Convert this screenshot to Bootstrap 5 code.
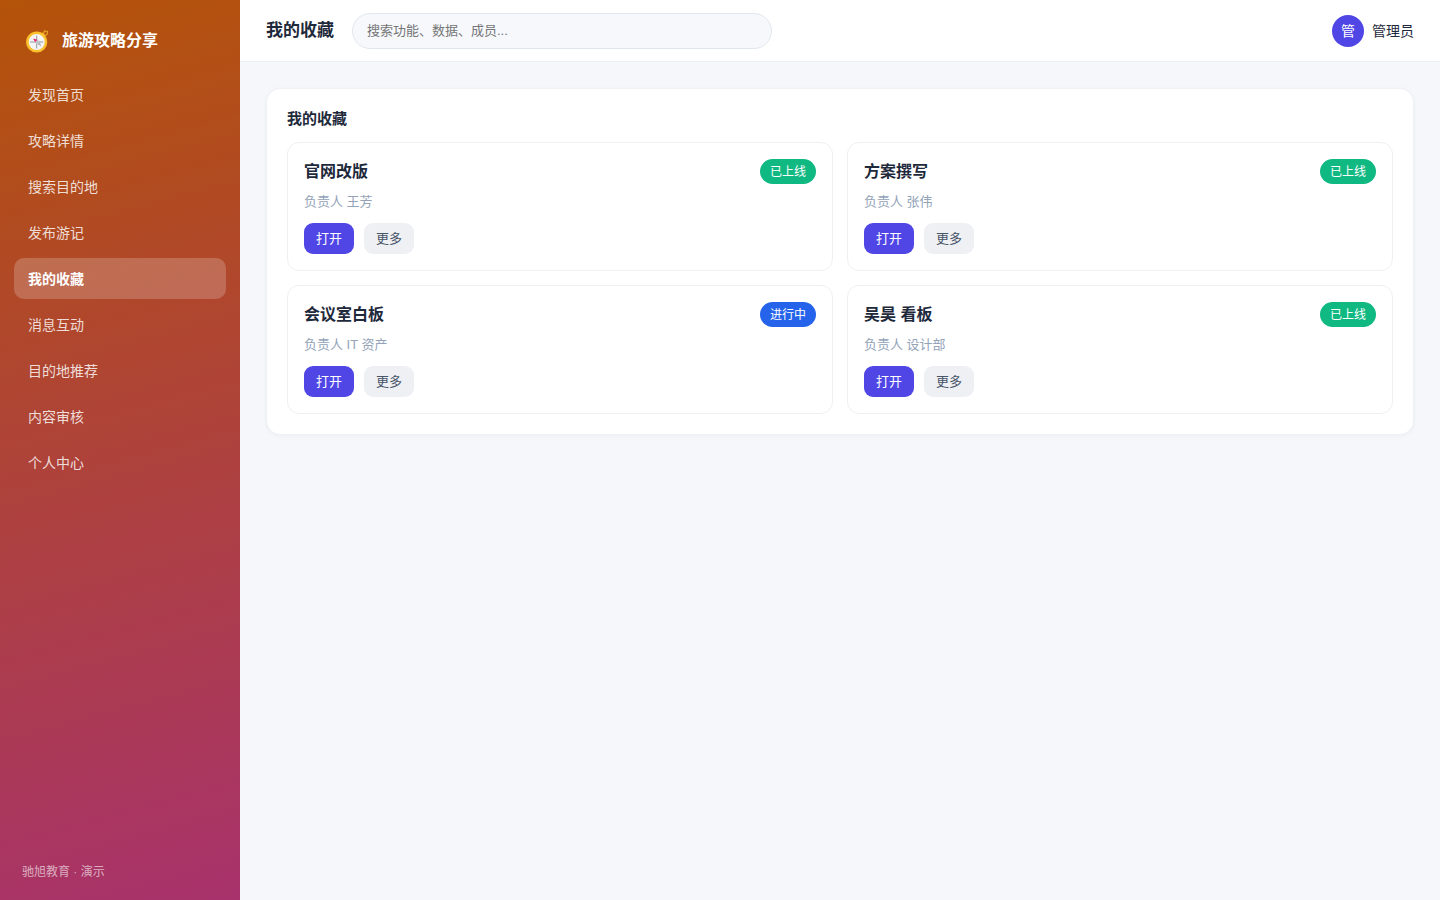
<!DOCTYPE html>
<html lang="zh-CN">
<head>
<meta charset="utf-8">
<meta name="viewport" content="width=device-width, initial-scale=1">
<title>我的收藏 - 旅游攻略分享</title>
<link href="https://cdn.jsdelivr.net/npm/bootstrap@5.3.0/dist/css/bootstrap.min.css" rel="stylesheet">
<style>
  body { font-family: "Liberation Sans", "Noto Sans CJK SC", sans-serif; font-size: 14px; line-height: 20px; color: #1e293b; background: #f5f7fb; }
  .sidebar { width: 240px; padding: 20px 14px; background: linear-gradient(165deg, #b45309, #a8326c); }
  .brand { padding: 0 12px; height: 42px; font-size: 16px; font-weight: 700; gap: 14px; margin-bottom: 12px; }
  .side-menu { gap: 5px; }
  .side-menu .nav-link { height: 41px; padding: 0 14px; border-radius: 10px; color: rgba(255,255,255,.82); }
  .side-menu .nav-link:hover { color: #fff; }
  .side-menu .nav-link.active { background: rgba(255,255,255,.2); color: #fff; font-weight: 700; }
  .side-foot { padding: 0 8px; font-size: 12px; line-height: 16px; color: rgba(255,255,255,.6); }
  .topbar { height: 62px; padding: 0 26px; gap: 18px; border-bottom: 1px solid #eceef2; }
  .topbar h1 { font-size: 17px; line-height: 24px; font-weight: 700; }
  .search-form { width: 420px; }
  .search-form .form-control { height: 36px; padding: 0 14px; font-size: 13px; background: #f6f8fc; border-color: #e2e6ee; }
  .search-form .form-control::placeholder { color: #757575; }
  .avatar { width: 32px; height: 32px; background: #4f46e5; }
  .content { padding: 26px; }
  .panel { padding: 20px; background: #fff; border: 1px solid #eff1f5; border-radius: 14px; box-shadow: 0 1px 4px rgba(15,23,42,.04); }
  .panel h2 { font-size: 15px; line-height: 20px; font-weight: 700; margin-bottom: 13px; }
  .tiles { --bs-gutter-x: 14px; --bs-gutter-y: 14px; }
  .tile { padding: 16px; border: 1px solid #eef0f3; border-radius: 12px; }
  .tile h3 { font-size: 16px; line-height: 26px; font-weight: 700; }
  .owner { font-size: 13px; line-height: 18px; margin: 8px 0 12px; color: #94a3b8; }
  .state { height: 25px; padding: 0 10px; font-size: 12px; line-height: 26px; font-weight: 400; }
  .state-live { background: #10b981; }
  .state-doing { background: #2563eb; }
  .actions { gap: 10px; }
  .act { --bs-btn-font-size: 13px; --bs-btn-line-height: 19px; --bs-btn-padding-x: 12px; --bs-btn-padding-y: 6px; --bs-btn-border-width: 0; --bs-btn-border-radius: 9px; }
  .act-open { --bs-btn-color: #fff; --bs-btn-bg: #4f46e5; --bs-btn-hover-color: #fff; --bs-btn-hover-bg: #4338ca; }
  .act-more { --bs-btn-color: #475569; --bs-btn-bg: #eef0f4; --bs-btn-hover-color: #334155; --bs-btn-hover-bg: #e2e6ec; }
</style>
</head>
<body>
<div class="d-flex min-vh-100">
  <aside class="sidebar d-flex flex-column flex-shrink-0 text-white">
    <div class="brand d-flex align-items-center">
      <svg width="22" height="24" viewBox="0 0 22 24" aria-hidden="true">
        <path d="M17.500 4.500l1-2.500 3 .5-.5 3-2.500 1.500" fill="none" stroke="#e8a327" stroke-width="1.200"/>
        <path d="M15.500 4.500l3 3" stroke="#fbc02d" stroke-width="3"/>
        <circle cx="10.700" cy="13" r="9.300" fill="#f5f5f5" stroke="#fbc02d" stroke-width="2.600"/>
        <path d="M10.700 6.500v13M4.200 13h13" stroke="#8f989d" stroke-width="1"/>
        <path d="M7 9.500l5 1.500-2.500 2.500z" fill="#e91e63"/>
        <path d="M10 14.500l3-3 2.500 6z" fill="#b0b8bc"/>
        <circle cx="11.300" cy="13" r="1.800" fill="#c3c9cc"/>
      </svg>
      <span>旅游攻略分享</span>
    </div>
    <nav class="side-menu nav flex-column" aria-label="主导航">
      <a class="nav-link d-flex align-items-center" href="#">发现首页</a>
      <a class="nav-link d-flex align-items-center" href="#">攻略详情</a>
      <a class="nav-link d-flex align-items-center" href="#">搜索目的地</a>
      <a class="nav-link d-flex align-items-center" href="#">发布游记</a>
      <a class="nav-link d-flex align-items-center active" aria-current="page" href="#">我的收藏</a>
      <a class="nav-link d-flex align-items-center" href="#">消息互动</a>
      <a class="nav-link d-flex align-items-center" href="#">目的地推荐</a>
      <a class="nav-link d-flex align-items-center" href="#">内容审核</a>
      <a class="nav-link d-flex align-items-center" href="#">个人中心</a>
    </nav>
    <div class="side-foot mt-auto">驰旭教育 · 演示</div>
  </aside>

  <div class="flex-grow-1">
    <header class="topbar d-flex align-items-center bg-white">
      <h1 class="mb-0">我的收藏</h1>
      <form class="search-form" role="search">
        <input type="search" class="form-control rounded-pill" placeholder="搜索功能、数据、成员..." aria-label="搜索">
      </form>
      <div class="d-flex align-items-center gap-2 ms-auto">
        <span class="avatar rounded-circle d-flex align-items-center justify-content-center text-white">管</span>
        <span>管理员</span>
      </div>
    </header>

    <main class="content">
      <section class="panel">
        <h2>我的收藏</h2>
        <div class="tiles row row-cols-2">
          <div class="col">
            <article class="tile">
              <div class="d-flex justify-content-between">
                <h3 class="mb-0">官网改版</h3>
                <span class="state state-live badge rounded-pill">已上线</span>
              </div>
              <p class="owner">负责人 王芳</p>
              <div class="actions d-flex">
                <button type="button" class="btn act act-open">打开</button>
                <button type="button" class="btn act act-more">更多</button>
              </div>
            </article>
          </div>
          <div class="col">
            <article class="tile">
              <div class="d-flex justify-content-between">
                <h3 class="mb-0">方案撰写</h3>
                <span class="state state-live badge rounded-pill">已上线</span>
              </div>
              <p class="owner">负责人 张伟</p>
              <div class="actions d-flex">
                <button type="button" class="btn act act-open">打开</button>
                <button type="button" class="btn act act-more">更多</button>
              </div>
            </article>
          </div>
          <div class="col">
            <article class="tile">
              <div class="d-flex justify-content-between">
                <h3 class="mb-0">会议室白板</h3>
                <span class="state state-doing badge rounded-pill">进行中</span>
              </div>
              <p class="owner">负责人 IT 资产</p>
              <div class="actions d-flex">
                <button type="button" class="btn act act-open">打开</button>
                <button type="button" class="btn act act-more">更多</button>
              </div>
            </article>
          </div>
          <div class="col">
            <article class="tile">
              <div class="d-flex justify-content-between">
                <h3 class="mb-0">吴昊 看板</h3>
                <span class="state state-live badge rounded-pill">已上线</span>
              </div>
              <p class="owner">负责人 设计部</p>
              <div class="actions d-flex">
                <button type="button" class="btn act act-open">打开</button>
                <button type="button" class="btn act act-more">更多</button>
              </div>
            </article>
          </div>
        </div>
      </section>
    </main>
  </div>
</div>
<script src="https://cdn.jsdelivr.net/npm/bootstrap@5.3.0/dist/js/bootstrap.bundle.min.js"></script>
</body>
</html>
